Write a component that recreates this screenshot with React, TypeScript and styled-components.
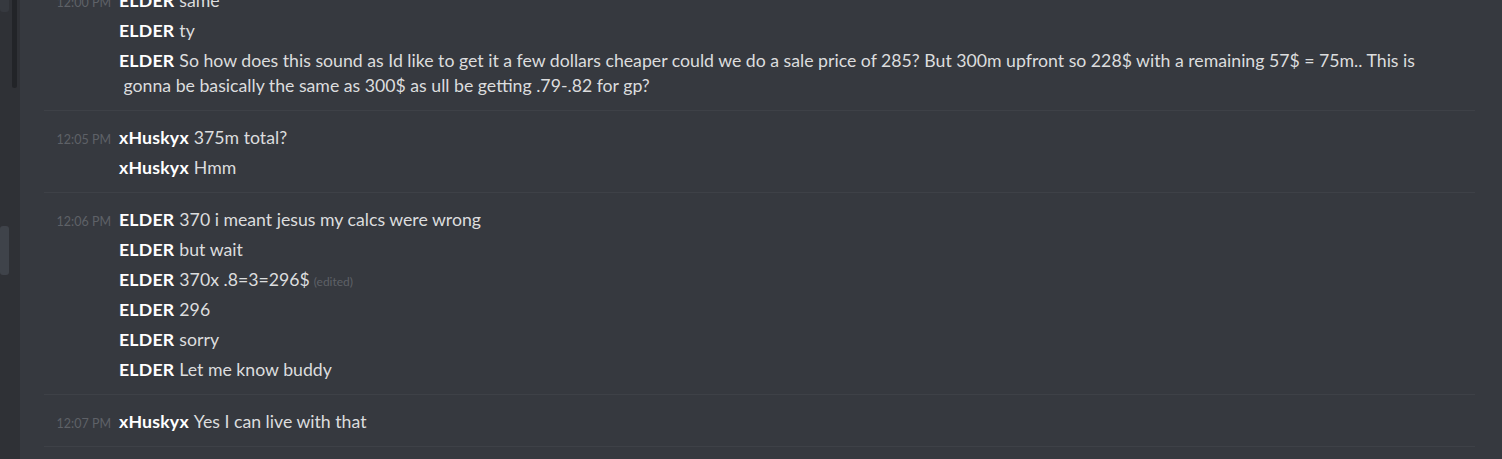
import React from "react";
import styled, { createGlobalStyle } from "styled-components";

const Global = createGlobalStyle`
  html, body { margin: 0; padding: 0; background: #36393f; overflow: hidden; }
  body { font-family: Lato, "Open Sans", sans-serif; }
`;

const Page = styled.div`
  display: flex;
  width: 1502px;
  height: 459px;
  overflow: hidden;
  background: #36393f;
`;

const Rail = styled.div`
  position: relative;
  flex: 0 0 20px;
  background: #2f3136;
`;

const Track = styled.div<{ $top: number; $left: number; $w: number; $h: number; $c: string }>`
  position: absolute;
  top: ${(p) => p.$top}px;
  left: ${(p) => p.$left}px;
  width: ${(p) => p.$w}px;
  height: ${(p) => p.$h}px;
  background: ${(p) => p.$c};
  border-radius: 3px;
`;

const Chat = styled.div`
  flex: 1;
  display: flex;
  flex-direction: column;
  padding: 0 27px 0 24px;
  margin-top: -86px;
`;

const Group = styled.div`
  padding: 11px 0 10px;
  border-bottom: 1px solid #3e4147;
`;

const Row = styled.div`
  display: flex;
  align-items: baseline;
  padding: 2.5px 0;
`;

const Stamp = styled.span`
  flex: 0 0 67px;
  text-align: right;
  margin-right: 8px;
  font-size: 12.5px;
  line-height: 16px;
  color: #5e6167;
  white-space: nowrap;
`;

const Body = styled.div`
  flex: 1;
  font-size: 17.7px;
  line-height: 25px;
  color: #dcddde;
  white-space: pre-wrap;
`;

const Name = styled.span`
  font-weight: 700;
  color: #ffffff;
  letter-spacing: 0.2px;
  margin-right: 5px;
`;

const Edited = styled.span`
  font-size: 12px;
  line-height: 0;
  color: #5e6167;
  margin-left: 4px;
`;

type Msg = { name: string; text: React.ReactNode; edited?: boolean };
type G = { time: string; stampAt: number; msgs: Msg[] };

const groups: G[] = [
  {
    time: "12:00 PM",
    stampAt: 2,
    msgs: [
      { name: "ELDER", text: "yo" },
      { name: "ELDER", text: "ok" },
      { name: "ELDER", text: "same" },
      { name: "ELDER", text: "ty" },
      {
        name: "ELDER",
        text: (
          <>
            {"So how does this sound as Id like to get it a few dollars cheaper could we do a sale price of 285? But 300m upfront so 228$ with a remaining 57$ = 75m.. This is"}
            <br />
            {" gonna be basically the same as 300$ as ull be getting .79-.82 for gp?"}
          </>
        ),
      },
    ],
  },
  {
    time: "12:05 PM",
    stampAt: 0,
    msgs: [
      { name: "xHuskyx", text: "375m total?" },
      { name: "xHuskyx", text: "Hmm" },
    ],
  },
  {
    time: "12:06 PM",
    stampAt: 0,
    msgs: [
      { name: "ELDER", text: "370 i meant jesus my calcs were wrong" },
      { name: "ELDER", text: "but wait" },
      { name: "ELDER", text: "370x .8=3=296$", edited: true },
      { name: "ELDER", text: "296" },
      { name: "ELDER", text: "sorry" },
      { name: "ELDER", text: "Let me know buddy" },
    ],
  },
  {
    time: "12:07 PM",
    stampAt: 0,
    msgs: [{ name: "xHuskyx", text: "Yes I can live with that" }],
  },
];

export default function App() {
  return (
    <Page>
      <Global />
      <Rail>
        <Track $top={-10} $left={0} $w={9} $h={22} $c="#36393f" />
        <Track $top={-10} $left={12} $w={5} $h={98} $c="#222428" />
        <Track $top={226} $left={0} $w={9} $h={49} $c="#3f434a" />
      </Rail>
      <Chat>
        {groups.map((g, gi) => (
          <Group key={gi}>
            {g.msgs.map((m, mi) => (
              <Row key={mi}>
                <Stamp>{mi === g.stampAt ? g.time : ""}</Stamp>
                <Body>
                  <Name>{m.name}</Name>
                  {m.text}
                  {m.edited && <Edited>(edited)</Edited>}
                </Body>
              </Row>
            ))}
          </Group>
        ))}
      </Chat>
    </Page>
  );
}
